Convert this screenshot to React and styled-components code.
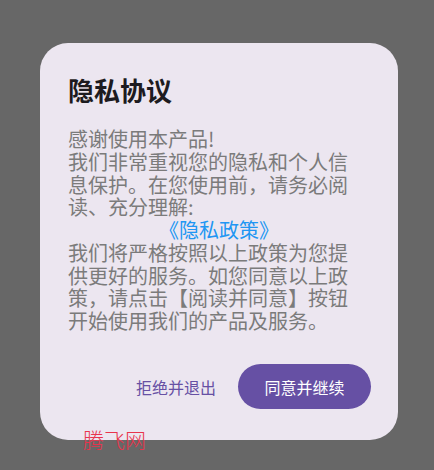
import React from 'react';
import styled, { createGlobalStyle } from 'styled-components';

const Global = createGlobalStyle`
  html, body {
    margin: 0;
    padding: 0;
    background: #676767;
    font-family: Roboto, "Noto Sans CJK SC", sans-serif;
  }
`;

const Screen = styled.div`
  width: 434px;
  height: 470px;
  box-sizing: border-box;
  padding: 43px 0 0 40px;
  position: relative;
  overflow: hidden;
`;

const Dialog = styled.div`
  width: 358px;
  height: 397px;
  box-sizing: border-box;
  background: #ece6f0;
  border-radius: 28px;
  padding: 31px 27px 31px 28px;
  display: flex;
  flex-direction: column;
`;

const Title = styled.h2`
  margin: 0;
  font-size: 26px;
  line-height: 32px;
  font-weight: 700;
  color: #1d1b20;
  font-family: "Noto Sans CJK SC", sans-serif;
`;

const Body = styled.div`
  margin-top: 22px;
  width: 290px;
  font-size: 20px;
  line-height: 22.75px;
  color: #7b7b7b;
  font-family: "Noto Sans CJK SC", sans-serif;
`;

const Para = styled.p`
  margin: 0;
`;

const Link = styled.p`
  margin: 0;
  text-align: center;
  color: #2196f3;
  width: 302px;
`;

const Actions = styled.div`
  margin-top: auto;
  display: flex;
  justify-content: flex-end;
  align-items: center;
  gap: 22px;
`;

const TextButton = styled.button`
  border: none;
  background: none;
  padding: 0;
  font-family: "Noto Sans CJK SC", sans-serif;
  font-size: 16px;
  color: #6750a4;
`;

const FilledButton = styled.button`
  border: none;
  width: 133px;
  height: 45px;
  border-radius: 23px;
  background: #6650a4;
  color: #ffffff;
  font-family: "Noto Sans CJK SC", sans-serif;
  font-size: 16px;
`;

const Watermark = styled.div`
  position: absolute;
  left: 83px;
  top: 426px;
  font-size: 21px;
  line-height: 26px;
  color: #e8344c;
  font-weight: 300;
  letter-spacing: 0px;
  font-family: "Noto Sans CJK SC", sans-serif;
`;

export default function App() {
  return (
    <Screen>
      <Global />
      <Dialog>
        <Title>隐私协议</Title>
        <Body>
          <Para>感谢使用本产品!</Para>
          <Para>我们非常重视您的隐私和个人信息保护。在您使用前，请务必阅读、充分理解:</Para>
          <Link>《隐私政策》</Link>
          <Para>我们将严格按照以上政策为您提供更好的服务。如您同意以上政策，请点击【阅读并同意】按钮开始使用我们的产品及服务。</Para>
        </Body>
        <Actions>
          <TextButton>拒绝并退出</TextButton>
          <FilledButton>同意并继续</FilledButton>
        </Actions>
      </Dialog>
      <Watermark>腾飞网</Watermark>
    </Screen>
  );
}
